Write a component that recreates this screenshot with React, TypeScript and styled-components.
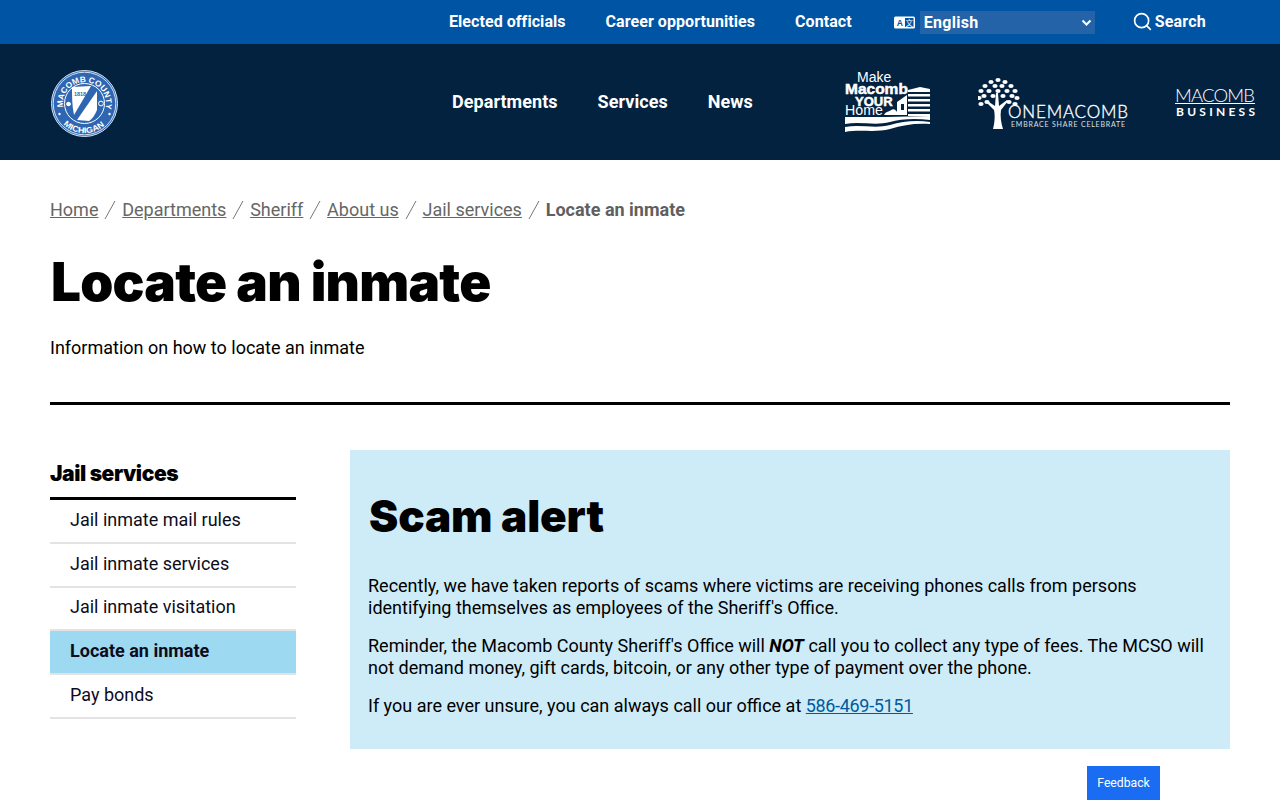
import * as React from 'react';
import styled, { createGlobalStyle } from 'styled-components';
import { Search } from 'lucide-react';

const GlobalStyle = createGlobalStyle`
  html, body {
    margin: 0;
    padding: 0;
    background: #fff;
    color: #000;
    font-family: Roboto, "Liberation Sans", sans-serif;
    font-size: 18px;
    overflow: hidden;
  }
  * { box-sizing: border-box; }
`;

const Page = styled.div`
  width: 1280px;
  height: 800px;
  position: relative;
  overflow: hidden;
`;

const TopBar = styled.div`
  height: 44px;
  background: #0054a4;
  display: flex;
  align-items: center;
  padding-left: 449px;
`;

const TopLink = styled.a`
  color: #fff;
  font-weight: 700;
  font-size: 16px;
  letter-spacing: 0.06px;
  margin-right: 40px;
  padding-bottom: 2px;
`;

const LangWrap = styled.div`
  display: flex;
  align-items: center;
  gap: 5px;
  margin-left: 2px;
  margin-right: 37px;
`;

const LangSelect = styled.div`
  width: 175px;
  height: 23px;
  margin-top: 1px;
  background: #2463a8;
  color: #fff;
  font-weight: 700;
  font-size: 16px;
  letter-spacing: 0.3px;
  padding-left: 4px;
  display: flex;
  align-items: center;
  justify-content: space-between;
  padding-right: 3px;
`;

const SearchLink = styled.a`
  color: #fff;
  font-weight: 700;
  font-size: 16px;
  letter-spacing: 0.2px;
  display: flex;
  align-items: center;
  gap: 2px;
  padding-bottom: 2px;
`;

const MainBar = styled.header`
  height: 116px;
  background: #03223f;
  display: flex;
  align-items: center;
  padding-left: 51px;
`;

const SealSlot = styled.div`
  display: flex;
  margin-top: 3px;
`;

const MainNav = styled.nav`
  display: flex;
  gap: 40px;
  margin-left: 334px;
  width: 393px;
  padding-bottom: 2px;
`;

const MainLink = styled.a`
  color: #fff;
  font-weight: 700;
  font-size: 18px;
  letter-spacing: 0.05px;
`;

const Logos = styled.div`
  display: flex;
  align-items: center;
`;

const HomeSlot = styled.div`
  display: flex;
  margin-right: 48px;
  margin-bottom: 4px;
`;

const OneSlot = styled.div`
  display: flex;
  margin-right: 47px;
  margin-top: 2px;
`;

const BusinessSlot = styled.div`
  display: flex;
`;

const Main = styled.main`
  padding: 0 50px;
`;

const Crumbs = styled.nav`
  display: flex;
  align-items: center;
  padding-top: 39px;
  height: 60px;
  font-size: 18px;
  color: #5f5f5f;
`;

const Crumb = styled.a`
  color: #666;
  text-decoration: underline;
`;

const CrumbSep = styled.span`
  width: 23.8px;
  display: flex;
  justify-content: center;
`;

const CrumbCurrent = styled.span`
  font-weight: 700;
`;

const Title = styled.h1`
  margin: 30px 0 0;
  font-family: Inter, sans-serif;
  font-weight: 900;
  font-size: 53px;
  line-height: 64px;
  letter-spacing: -0.75px;
  padding-left: 1px;
`;

const Lead = styled.p`
  margin: 22px 0 0;
  font-size: 18px;
  line-height: 24px;
`;

const Rule = styled.hr`
  margin: 42px 0 0;
  border: 0;
  height: 3px;
  background: #000;
`;

const Columns = styled.div`
  display: grid;
  grid-template-columns: 246px 880px;
  column-gap: 54px;
  margin-top: 45px;
`;

const SideTitle = styled.h2`
  margin: 0;
  font-family: Inter, sans-serif;
  font-weight: 900;
  font-size: 21px;
  line-height: 28px;
  letter-spacing: -0.4px;
  padding: 10px 0 9px;
  border-bottom: 3px solid #000;
`;

const SideList = styled.ul`
  list-style: none;
  margin: 0;
  padding: 0;
`;

const SideItem = styled.li<{ $active?: boolean }>`
  height: 43.8px;
  padding: 0 0 3px 20px;
  display: flex;
  align-items: center;
  font-size: 18px;
  color: #0c0c1c;
  border-bottom: 2px solid #e3e3e3;
  font-weight: ${p => (p.$active ? 700 : 400)};
  background: ${p => (p.$active ? '#9dd9f1' : 'transparent')};
`;

const Alert = styled.section`
  background: #ceebf8;
  height: 299px;
  padding: 38px 18px 0;
`;

const AlertTitle = styled.h2`
  margin: 0 0 31px;
  padding-left: 1px;
  font-family: Inter, sans-serif;
  font-weight: 900;
  font-size: 44px;
  line-height: 56px;
  letter-spacing: -0.15px;
`;

const AlertText = styled.p`
  margin: 0 0 16px;
  font-size: 18px;
  line-height: 22px;
`;

const PhoneLink = styled.a`
  color: #005a9c;
  text-decoration: underline;
  letter-spacing: -0.33px;
`;

const Feedback = styled.button`
  position: absolute;
  left: 1087px;
  top: 766px;
  width: 73px;
  height: 34px;
  border: 0;
  padding: 0 0 1px;
  background: #1a6df2;
  color: #fff;
  font-family: Roboto, sans-serif;
  font-size: 12.2px;
`;

const crumbs = ['Home', 'Departments', 'Sheriff', 'About us', 'Jail services'];
const sideItems = ['Jail inmate mail rules', 'Jail inmate services', 'Jail inmate visitation', 'Locate an inmate', 'Pay bonds'];

const Seal = () => (
  <svg width="67" height="67" viewBox="0 0 67 67">
    <defs>
      <path id="sealTop" d="M12.3 37.2 A21.5 21.5 0 1 1 54.7 37.2" />
      <path id="sealBottom" d="M12.6 54.4 A29.5 29.5 0 0 0 54.4 54.4" />
    </defs>
    <circle cx="33.5" cy="33.5" r="33" fill="#2f66b2" stroke="#d5e2f4" strokeWidth="1" />
    <circle cx="33.5" cy="33.5" r="31.3" fill="none" stroke="#fff" strokeWidth="0.8" />
    <circle cx="33.5" cy="33.5" r="20" fill="none" stroke="#fff" strokeWidth="1" />
    <text fill="#fff" fontFamily="Liberation Sans" fontWeight="700" fontSize="8.2">
      <textPath href="#sealTop" textLength="76" lengthAdjust="spacingAndGlyphs">MACOMB COUNTY</textPath>
    </text>
    <text fill="#fff" fontFamily="Liberation Sans" fontWeight="700" fontSize="8">
      <textPath href="#sealBottom" textLength="45" lengthAdjust="spacingAndGlyphs">MICHIGAN</textPath>
    </text>
    <path d="M21 17 L40 16 L23 45 C21 36 21 26 21 17 Z" fill="#fff" />
    <path d="M46 21 L46 40 C44 45 41 49 38 51 L26 50 Z" fill="#fff" />
    <text x="29" y="25.5" fill="#2f66b2" fontFamily="Liberation Sans" fontWeight="700" fontSize="5.5" textAnchor="middle">1818</text>
    <path d="M15 34 C16 31 19 31 20 34 C19 37 16 37 15 34 Z" fill="#fff" />
    <circle cx="50" cy="33.5" r="2.4" fill="none" stroke="#fff" />
    <circle cx="8.5" cy="44" r="1.2" fill="#fff" />
    <circle cx="58.5" cy="44" r="1.2" fill="#fff" />
  </svg>
);

const TranslateIcon = () => (
  <svg width="21" height="13" viewBox="0 0 21 13">
    <rect x="0" y="0.5" width="21" height="12" rx="1.5" fill="#fff" />
    <rect x="11" y="2" width="8.5" height="9" fill="#0054a4" />
    <text x="5.8" y="10" fill="#0054a4" fontFamily="Liberation Sans" fontWeight="700" fontSize="8.5" textAnchor="middle">A</text>
    <text x="15.2" y="9.8" fill="#fff" fontFamily="Noto Sans CJK SC, sans-serif" fontSize="7.5" textAnchor="middle">文</text>
  </svg>
);

const Chevron = () => (
  <svg width="11" height="8" viewBox="0 0 11 8">
    <path d="M1.5 1.5 L5.5 5.5 L9.5 1.5" fill="none" stroke="#fff" strokeWidth="2" />
  </svg>
);

const HomeLogo = () => (
  <svg width="85" height="64" viewBox="0 -3 85 64">
    <g fill="#fff">
      <text x="12" y="11" fontFamily="Liberation Sans" fontSize="14">Make</text>
      <text x="0" y="23" fontFamily="Liberation Sans" fontWeight="700" fontSize="15.5" stroke="#fff" strokeWidth="0.5">Macomb</text>
      <text x="10" y="34.5" fontFamily="Liberation Sans" fontWeight="700" fontSize="13" stroke="#fff" strokeWidth="0.5">YOUR</text>
      <text x="0" y="44" fontFamily="Liberation Sans" fontSize="14.2">Home</text>
      <path d="M63 19 L75 16 L85 18 V21 H63 Z" />
      <path d="M63 23 H85 V25.5 H63 Z M63 28 H85 V30.5 H63 Z M63 33 H85 V35.5 H63 Z M63 38 H85 V40.5 H63 Z M63 43 H85 V45 H63 Z" />
      <path d="M52 31 L62 24 V44 H52 Z" />
      <rect x="56" y="33" width="3" height="6" fill="#03223f" />
      <path d="M39 44 C41 40 44 41 46 39 C49 37 51 39 52 41 V44 Z" />
      <path d="M0 46 H40 L85 45 V49 C70 47 55 48 45 51 C30 55 15 50 0 53 Z" />
      <path d="M0 56 C15 53 30 58 45 54 C58 50 72 49 85 51 V53 C70 52 58 54 45 58 C30 62 15 58 0 61 Z" />
    </g>
  </svg>
);

const leaves = [
  [20, 4], [13, 6], [27, 6], [7, 10], [17, 10], [24, 10], [33, 10], [3, 15], [11, 15], [20, 15], [29, 15], [37, 15],
  [6, 20], [15, 20], [25, 20], [34, 20], [1, 22], [39, 22], [9, 26], [31, 26], [3, 28], [37, 28],
];

const OneMacombLogo = () => (
  <svg width="150" height="54" viewBox="0 0 150 54">
    <g fill="#fff">
      <path d="M15 53 C17 46 17 38 16 34 L8 26 L9.5 25 L17 30 L18 17 L20 17 L21 30 L29 24 L30 25 L23 34 C22 40 23 47 25 53 Z" />
      {leaves.map(([x, y], i) => (
        <ellipse key={i} cx={x} cy={y} rx="2.6" ry="2.1" />
      ))}
      <text x="30" y="42" fontFamily="Lato, sans-serif" fontWeight="300" fontSize="17" stroke="#fff" strokeWidth="0.35" textLength="120">ONEMACOMB</text>
      <text x="33" y="51" fontFamily="Lato, sans-serif" fontSize="7" textLength="114" opacity="0.85">EMBRACE SHARE CELEBRATE</text>
    </g>
  </svg>
);

const BusinessLogo = () => (
  <svg width="81" height="38" viewBox="0 -4 81 38">
    <g fill="#fff">
      <text x="0" y="15" fontFamily="Lato, sans-serif" fontWeight="300" fontSize="18.5" textLength="80">MACOMB</text>
      <rect x="0" y="16" width="80" height="1" />
      <text x="1" y="29" fontFamily="Lato, sans-serif" fontWeight="700" fontSize="12" textLength="79">BUSINESS</text>
    </g>
  </svg>
);

const App = (): JSX.Element => (
  <Page>
    <GlobalStyle />
    <TopBar>
      <TopLink>Elected officials</TopLink>
      <TopLink>Career opportunities</TopLink>
      <TopLink>Contact</TopLink>
      <LangWrap>
        <TranslateIcon />
        <LangSelect>
          English
          <Chevron />
        </LangSelect>
      </LangWrap>
      <SearchLink>
        <Search size={21} strokeWidth={1.9} />
        Search
      </SearchLink>
    </TopBar>
    <MainBar>
      <SealSlot><Seal /></SealSlot>
      <MainNav>
        <MainLink>Departments</MainLink>
        <MainLink>Services</MainLink>
        <MainLink>News</MainLink>
      </MainNav>
      <Logos>
        <HomeSlot><HomeLogo /></HomeSlot>
        <OneSlot><OneMacombLogo /></OneSlot>
        <BusinessSlot><BusinessLogo /></BusinessSlot>
      </Logos>
    </MainBar>
    <Main>
      <Crumbs>
        {crumbs.map(c => (
          <React.Fragment key={c}>
            <Crumb>{c}</Crumb>
            <CrumbSep>
              <svg width="12" height="20" viewBox="0 0 12 20">
                <path d="M1 19 L11 1" stroke="#777" strokeWidth="1" fill="none" />
              </svg>
            </CrumbSep>
          </React.Fragment>
        ))}
        <CrumbCurrent>Locate an inmate</CrumbCurrent>
      </Crumbs>
      <Title>Locate an inmate</Title>
      <Lead>Information on how to locate an inmate</Lead>
      <Rule />
      <Columns>
        <div>
          <SideTitle>Jail services</SideTitle>
          <SideList>
            {sideItems.map(s => (
              <SideItem key={s} $active={s === 'Locate an inmate'}>{s}</SideItem>
            ))}
          </SideList>
        </div>
        <Alert>
          <AlertTitle>Scam alert</AlertTitle>
          <AlertText>
            Recently, we have taken reports of scams where victims are receiving phones calls from persons identifying themselves as employees of the Sheriff's Office.
          </AlertText>
          <AlertText>
            Reminder, the Macomb County Sheriff's Office will <b><i>NOT</i></b> call you to collect any type of fees. The MCSO will not demand money, gift cards, bitcoin, or any other type of payment over the phone.
          </AlertText>
          <AlertText>
            If you are ever unsure, you can always call our office at <PhoneLink>586-469-5151</PhoneLink>
          </AlertText>
        </Alert>
      </Columns>
    </Main>
    <Feedback>Feedback</Feedback>
  </Page>
);

export default App;
